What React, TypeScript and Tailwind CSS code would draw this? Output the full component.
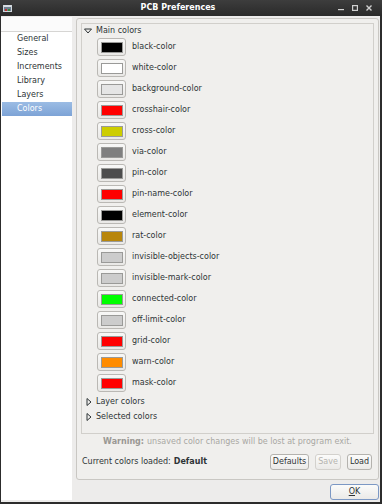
import React from 'react';

const colors: [string, string][] = [
  ['black-color', '#000000'],
  ['white-color', '#ffffff'],
  ['background-color', '#e5e5e5'],
  ['crosshair-color', '#ff0000'],
  ['cross-color', '#cdcd00'],
  ['via-color', '#7f7f7f'],
  ['pin-color', '#4d4d4d'],
  ['pin-name-color', '#ff0000'],
  ['element-color', '#000000'],
  ['rat-color', '#b8860b'],
  ['invisible-objects-color', '#cccccc'],
  ['invisible-mark-color', '#cccccc'],
  ['connected-color', '#00ff00'],
  ['off-limit-color', '#cccccc'],
  ['grid-color', '#ff0000'],
  ['warn-color', '#ff8c00'],
  ['mask-color', '#ff0000'],
];

const sections = ['General', 'Sizes', 'Increments', 'Library', 'Layers', 'Colors'];

function TitleBar() {
  return (
    <div className="h-[16px] flex items-center bg-gradient-to-b from-[#3d3d3d] to-[#2a2a2a] text-white">
      <div className="w-[20px] flex items-center pl-[3px]">
        <svg width="9" height="9" viewBox="0 0 9 9">
          <rect x="0.5" y="1.5" width="8" height="6" fill="#6f7f8f" stroke="#cfd6dc" />
          <rect x="1" y="1" width="7" height="2" fill="#d8dde2" />
          <rect x="2" y="5" width="2" height="2" fill="#c0302c" />
          <rect x="5" y="5" width="2" height="2" fill="#3a8a3a" />
        </svg>
      </div>
      <div className="flex-1 text-center font-bold text-[8px] leading-none">PCB Preferences</div>
      <div className="w-[46px] flex items-center gap-[8px] pl-[2px] text-[#d0d0d0]">
        <svg width="6" height="6" viewBox="0 0 6 6">
          <rect x="0" y="4" width="6" height="1.2" fill="#d0d0d0" />
        </svg>
        <svg width="6" height="6" viewBox="0 0 6 6">
          <rect x="0.6" y="0.6" width="4.8" height="4.8" fill="none" stroke="#d0d0d0" strokeWidth="1.2" />
        </svg>
        <svg width="6" height="6" viewBox="0 0 6 6">
          <path d="M0.5 0.5 L5.5 5.5 M5.5 0.5 L0.5 5.5" stroke="#d0d0d0" strokeWidth="1.4" />
        </svg>
      </div>
    </div>
  );
}

function Sidebar() {
  return (
    <div className="w-[71px] bg-white flex flex-col">
      <div className="h-[15px] border-b border-[#d6d5d3] bg-[#fbfbfb]" />
      {sections.map(name => (
        <div
          key={name}
          className={
            name === 'Colors'
              ? 'h-[14px] flex items-center pl-[15px] ml-[1px] bg-gradient-to-b from-[#9bbce4] to-[#7da3d6] text-white'
              : 'h-[14px] flex items-center pl-[16px] text-[#2e3436]'
          }
        >
          {name}
        </div>
      ))}
    </div>
  );
}

function DownArrow() {
  return (
    <svg width="8" height="6" viewBox="0 0 8 6">
      <path d="M0.5 1 L7.5 1 L4 5 Z" fill="none" stroke="#2e3436" strokeWidth="1" />
    </svg>
  );
}

function RightArrow() {
  return (
    <svg width="6" height="8" viewBox="0 0 6 8">
      <path d="M1 0.5 L5 4 L1 7.5 Z" fill="none" stroke="#2e3436" strokeWidth="1" />
    </svg>
  );
}

function ColorRow({ name, color }: { name: string; color: string }) {
  return (
    <div className="h-[18px] mb-[3px] flex items-center">
      <div className="w-[29px] h-[18px] rounded-[3px] border border-[#bab8b4] bg-gradient-to-b from-[#f8f8f7] to-[#e9e8e6] flex items-center justify-center">
        <div className="w-[22px] h-[11px] border border-[#9a9a98]" style={{ backgroundColor: color }} />
      </div>
      <span className="ml-[6px] text-[#2e3436]">{name}</span>
    </div>
  );
}

function Button({ label, disabled, className }: { label: React.ReactNode; disabled?: boolean; className: string }) {
  return (
    <div
      className={
        'h-[16px] rounded-[3px] border flex items-center justify-center bg-gradient-to-b from-[#fbfbfa] to-[#ebeae8] ' +
        (disabled ? 'border-[#d3d1cd] text-[#b5b3af] ' : 'border-[#b4b2ae] text-[#2e3436] ') +
        className
      }
    >
      {label}
    </div>
  );
}

export default function App() {
  return (
    <div
      className="w-[382px] h-[504px] bg-[#2c2c2c] flex flex-col text-[8px] leading-none"
      style={{ fontFamily: '"DejaVu Sans", sans-serif' }}
    >
      <TitleBar />
      <div className="flex-1 ml-[1px] mr-[2px] mb-[2px] bg-[#edeceb] flex pt-[1px] pb-[2px]">
        <Sidebar />
        <div className="flex-1 ml-[4px] mr-[1px] flex flex-col">
          <div className="mt-[1px] h-[462px] rounded-[3px] border border-[#c9c7c3] bg-[#f0efed] flex flex-col px-[4px] pt-[4px]">
            <div className="h-[411px] border border-[#d1cfcb] flex flex-col">
              <div className="h-[14px] flex items-center pl-[2px]">
                <DownArrow />
                <span className="ml-[4px] text-[#2e3436]">Main colors</span>
              </div>
              <div className="pl-[15px] flex flex-col">
                {colors.map(([name, color]) => (
                  <ColorRow key={name} name={name} color={color} />
                ))}
              </div>
              <div className="h-[14px] flex items-center pl-[4px]">
                <RightArrow />
                <span className="ml-[4px] text-[#2e3436]">Layer colors</span>
              </div>
              <div className="h-[15px] flex items-center pl-[4px]">
                <RightArrow />
                <span className="ml-[4px] text-[#2e3436]">Selected colors</span>
              </div>
            </div>
            <div className="h-[16px] flex items-center justify-center text-[#a9a7a3]">
              <span className="font-bold text-[#9a9894]">Warning:</span>
              <span className="ml-[3px]">unsaved color changes will be lost at program exit.</span>
            </div>
            <div className="mt-[4px] h-[16px] flex items-center">
              <span className="text-[#2e3436] ml-[1px]">Current colors loaded:</span>
              <span className="ml-[3px] font-bold text-[#2e3436]">Default</span>
              <div className="flex-1" />
              <Button label="Defaults" className="w-[39px]" />
              <Button label="Save" disabled className="w-[26px] ml-[6px]" />
              <Button label="Load" className="w-[25px] ml-[6px] mr-[2px]" />
            </div>
          </div>
          <div className="mt-[4px] flex justify-end">
            <div className="w-[49px] h-[16px] rounded-[3px] border border-[#7c98c4] bg-gradient-to-b from-[#fbfbfa] to-[#ebeae8] flex items-center justify-center text-[#2e3436]">
              <span className="underline underline-offset-1">O</span>K
            </div>
          </div>
        </div>
      </div>
    </div>
  );
}
